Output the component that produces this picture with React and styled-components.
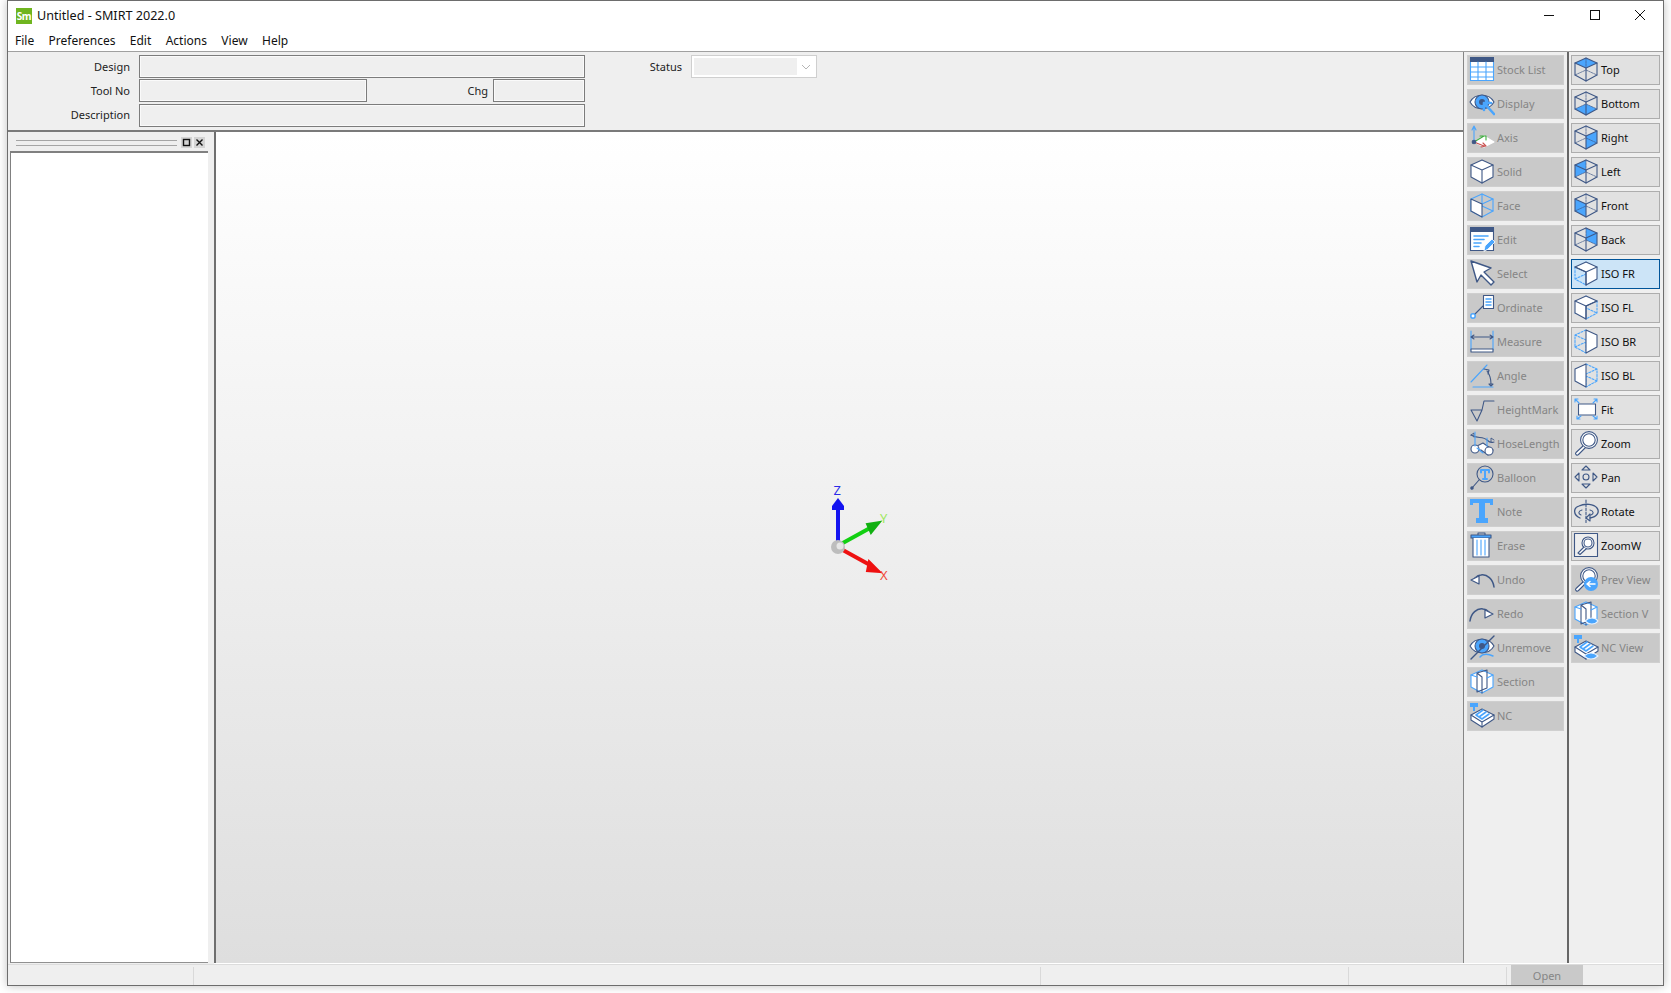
import React from "react";
import styled, { createGlobalStyle } from "styled-components";

const NAVY = "#3f5886";
const BLUE = "#4aa5fd";

const GlobalStyle = createGlobalStyle`
  html, body { margin: 0; padding: 0; background: #fff; }
  body { font-family: "Noto Sans", "Open Sans", "Liberation Sans", sans-serif; overflow: hidden; }
`;

const Page = styled.div`
  width: 1671px;
  height: 993px;
  padding: 0 7px 7px 7px;
  box-sizing: border-box;
  background: #fff;
`;

const Win = styled.div`
  height: 100%;
  box-sizing: border-box;
  border: 1px solid #6d6d6d;
  background: #fff;
  display: flex;
  flex-direction: column;
  box-shadow: 0 0 9px rgba(0, 0, 0, 0.25);
`;

const TitleBar = styled.div`
  height: 29px;
  display: flex;
  align-items: center;
  padding-left: 8px;
  flex: none;
`;

const Logo = styled.div`
  width: 16px;
  height: 16px;
  background: #6fb51f;
  color: #fff;
  font-size: 10px;
  font-weight: 700;
  letter-spacing: -0.5px;
  line-height: 16px;
  text-align: center;
`;

const TitleText = styled.div`
  margin-left: 5px;
  font-size: 12.6px;
  color: #111;
`;

const WinControls = styled.div`
  margin-left: auto;
  display: flex;
  align-items: center;
  margin: 0 17px 2px auto;
  gap: 33.5px;
  svg { display: block; }
`;

const MenuBar = styled.div`
  height: 21px;
  display: flex;
  align-items: flex-start;
  padding-left: 7px;
  gap: 14.4px;
  font-size: 12px;
  line-height: 21px;
  color: #111;
  flex: none;
`;

const Body = styled.div`
  flex: 1;
  display: flex;
  min-height: 0;
  border-top: 1px solid #a0a0a0;
`;

const MainCol = styled.div`
  flex: 1;
  display: flex;
  flex-direction: column;
  min-width: 0;
`;

const FormPanel = styled.div`
  height: 80px;
  flex: none;
  background: #efefef;
  border-bottom: 2px solid #7a7a7a;
  display: flex;
  padding-top: 3px;
  box-sizing: border-box;
`;

const FormGrid = styled.div`
  width: 577px;
  flex: none;
  display: flex;
  flex-direction: column;
  gap: 1px;
`;

const FormRow = styled.div`
  display: flex;
  align-items: center;
  height: 23px;
  margin-top: ${(p) => p.$mt || 0}px;
`;

const Label = styled.div`
  width: ${(p) => p.$w || 122}px;
  margin-right: ${(p) => p.$gap ?? 9}px;
  padding-bottom: ${(p) => (p.$up ? 2 : 0)}px;
  text-align: right;
  font-size: 11px;
  color: #222;
  flex: none;
`;

const Field = styled.div`
  width: ${(p) => p.$w}px;
  height: 23px;
  box-sizing: border-box;
  border: 1px solid #7c7c7c;
  box-shadow: inset 0 0 0 1px #fafafa;
  background: #efefef;
  flex: none;
`;

const Combo = styled.div`
  width: 126px;
  height: 23px;
  box-sizing: border-box;
  border: 1px solid #cfcfcf;
  background: #fff;
  padding: 2px;
  display: flex;
  align-items: center;
  flex: none;
`;

const ComboFace = styled.div`
  width: 103px;
  height: 17px;
  background: #efefef;
`;

const ComboArrow = styled.div`
  flex: 1;
  display: flex;
  justify-content: center;
`;

const SplitRow = styled.div`
  flex: 1;
  display: flex;
  min-height: 0;
`;

const SidePanel = styled.div`
  width: 206px;
  flex: none;
  background: #efefef;
  display: flex;
  flex-direction: column;
  padding-bottom: 1px;
  box-sizing: border-box;
`;

const Grip = styled.div`
  height: 19px;
  flex: none;
  display: flex;
  align-items: center;
  padding: 2px 0 0 8px;
  box-sizing: border-box;
  gap: 2px;
`;

const GripLines = styled.div`
  width: 161px;
  height: 4px;
  margin-right: 2px;
  border-top: 1px solid #a5a5a5;
  border-bottom: 1px solid #a5a5a5;
`;

const GripBtn = styled.div`
  width: 11px;
  height: 11px;
  background: #d4d4d4;
  svg { display: block; }
`;

const TreeBox = styled.div`
  flex: 1;
  margin: 0 6px 0 2px;
  background: #fff;
  border-top: 2px solid #808080;
  border-left: 1px solid #808080;
  border-bottom: 1px solid #909090;
`;

const Canvas = styled.div`
  flex: 1;
  position: relative;
  border-left: 2px solid #6f6f6f;
  background: linear-gradient(#ffffff 0%, #dedede 100%);
  margin-bottom: 1px;
`;

const AxisGizmo = styled.svg`
  position: absolute;
  left: 598px;
  top: 347px;
`;

const ToolCol = styled.div`
  width: ${(p) => p.$w}px;
  flex: none;
  box-sizing: border-box;
  background: #efefef;
  border-left: ${(p) => (p.$thin ? "1px solid #858585" : "2px solid #666")};
  display: flex;
  flex-direction: column;
  gap: 4px;
  padding: 3px 3px 0 ${(p) => (p.$thin ? 3 : 2)}px;
  margin-bottom: 1px;
`;

const ToolBtn = styled.div`
  height: 30px;
  flex: none;
  box-sizing: border-box;
  display: flex;
  align-items: center;
  gap: 2px;
  padding: 0 0 2px 1px;
  font-size: 11px;
  white-space: nowrap;
  overflow: hidden;
  border: 1px solid ${(p) => (p.$hot ? "#005499" : p.$off ? "#cfcfcf" : "#adadad")};
  background: ${(p) => (p.$hot ? "#cce4f7" : p.$off ? "#c9c9c9" : "#e1e1e1")};
  color: ${(p) => (p.$off ? "#858585" : "#111")};
  svg { flex: none; display: block; }
`;

const StatusBar = styled.div`
  height: 21px;
  flex: none;
  display: flex;
  background: #efefef;
  border-top: 1px solid #dcdcdc;
  box-sizing: border-box;
`;

const StatusCell = styled.div`
  width: ${(p) => p.$w}px;
  flex: none;
  box-sizing: border-box;
  margin-top: 2px;
  border-right: 1px solid #d9d9d9;
`;

const OpenBtn = styled.div`
  width: 72px;
  flex: none;
  margin: 0 1px 0 4px;
  background: #c9c9c9;
  color: #858585;
  font-size: 11px;
  line-height: 22px;
  text-align: center;
`;

const Svg = ({ children }) => (
  <svg width="26" height="26" viewBox="0 0 26 26" fill="none" stroke={NAVY} strokeWidth="1.1" strokeLinejoin="round" strokeLinecap="round">
    {children}
  </svg>
);

const HEX = "13,2 24,7 24,19 13,25 2,19 2,7";
const faces = {
  top: "13,2 24,7 13,12 2,7",
  bottom: "2,19 13,14 24,19 13,25",
  right: "13,12 24,7 24,19 13,25",
  left: "2,7 13,2 13,14 2,19",
  front: "2,7 13,12 13,25 2,19",
  back: "13,2 24,7 24,19 13,14",
};

// filled view cubes: Top, Bottom, Right ...
const ViewCube = ({ face }) => (
  <Svg>
    <polygon points={faces[face]} fill={BLUE} stroke="none" />
    <polygon points={HEX} />
    <path d="M2 7L13 12L24 7M13 12V25" />
    <path d="M13 2V14M2 19L13 14L24 19" strokeWidth="0.7" strokeDasharray="2 1" />
  </Svg>
);

// wire cubes with hidden faces in dashed blue
const IsoCube = ({ solid, dash }) => (
  <Svg>
    {dash && <path d={dash} stroke={BLUE} strokeDasharray="2 1.5" />}
    <polygon points={solid} fill="#fff" />
    <path d="M2 7L13 12L24 7M13 12V25" />
  </Svg>
);

const Eye = ({ slash, arrow }) => (
  <Svg>
    <path d="M1 12C6 3 20 3 25 12C20 21 6 21 1 12Z" fill="#fff" />
    <circle cx="13" cy="12" r="7" fill={BLUE} stroke={NAVY} />
    <circle cx="13" cy="12" r="3" fill={NAVY} stroke="none" />
    {arrow && <path d="M15 13L25 24M15 13V20M15 13H22" stroke={BLUE} strokeWidth="2.6" />}
    {slash && <path d="M2 25L25 2" strokeWidth="1.4" />}
    {slash && <path d="M11 23C14 19 20 20 24 22" stroke={BLUE} strokeWidth="1.4" />}
  </Svg>
);

const Section = ({ eye }) => (
  <Svg>
    <polygon points={HEX} fill="#fff" stroke={BLUE} />
    <path d="M8 5L18 2V20L8 24ZM8 5L13 9V25" />
    <path d="M2 7L8 9M24 7L18 10" stroke={BLUE} />
    {eye && <path d="M12 21C16 17 22 17 25 21C22 25 16 25 12 21Z" fill={BLUE} stroke="#e6f2ff" />}
  </Svg>
);

const Nc = ({ eye }) => (
  <Svg>
    <polygon points="2,13 13,7 25,13 25,17 13,25 2,18" fill="#fff" />
    <path d="M2 13L13 20L25 13M13 20V25" />
    <path d="M7 13L14 8M10 15L17 10M13 17L20 12M7 13L13 17" stroke={BLUE} strokeWidth="1.6" />
    <path d="M1 1H9V5H6V9H4V5H1Z" fill={BLUE} stroke="none" />
    {eye && <path d="M11 22C15 18 21 18 25 22C21 26 15 26 11 22Z" fill={BLUE} stroke="#e6f2ff" />}
  </Svg>
);

const Loupe = () => (
  <>
    <circle cx="16" cy="10" r="8.4" fill="#fff" />
    <circle cx="16" cy="10" r="6.2" />
    <path d="M10 16L3 22.5A1.6 1.6 0 0 0 5.5 24.5L12 18" fill="#fff" />
  </>
);

const icons = {
  stock: (
    <Svg>
      <rect x="1.5" y="1.5" width="23" height="23" fill="#fff" stroke={BLUE} />
      <rect x="1" y="1" width="24" height="5" fill={NAVY} stroke="none" />
      <path d="M1.5 11H24.5M1.5 16H24.5M1.5 21H24.5M9 6V24M17 6V24" stroke={BLUE} />
    </Svg>
  ),
  display: <Eye arrow />,
  axis: (
    <Svg>
      <path d="M5 18L15 12L25 18L15 23Z" fill="#fff" stroke="#fff" />
      <path d="M5 18V3M3 6L5 2L7 6" stroke={BLUE} />
      <path d="M5 18L15 12M11 12H17V16" stroke="#3fae3f" />
      <path d="M5 18L15 22M12 23L17 22L14 19" stroke="#c9504f" />
      <circle cx="5" cy="18" r="1.8" fill={NAVY} />
    </Svg>
  ),
  solid: <IsoCube solid={HEX} />,
  face: (
    <Svg>
      <polygon points={HEX} stroke={BLUE} />
      <path d="M13 2V14M24 7L13 12M2 19L13 14L24 19" stroke={BLUE} />
      <polygon points={faces.front} fill="#fff" />
    </Svg>
  ),
  edit: (
    <Svg>
      <rect x="1.5" y="1.5" width="23" height="23" fill="#fff" />
      <rect x="1" y="1" width="24" height="5" fill={NAVY} stroke="none" />
      <path d="M5 10H19M5 13.5H15M5 17H12M5 20.5H10" stroke={BLUE} strokeWidth="1.6" />
      <path d="M15 25L16 20L23 13L26 16L19 23Z" fill={BLUE} stroke="#fff" strokeWidth="0.8" />
    </Svg>
  ),
  select: (
    <Svg>
      <path d="M2 1L22 8L15 12L25 22L22 25L12 15L8 22Z" fill="#fff" strokeWidth="1.4" />
    </Svg>
  ),
  ordinate: (
    <Svg>
      <rect x="14.5" y="1.5" width="10" height="13" fill="#fff" />
      <path d="M17 5H22M17 8H22M17 11H22" stroke={BLUE} strokeWidth="1.5" />
      <path d="M5 21L14 12" />
      <circle cx="4" cy="22" r="2.2" fill="#fff" stroke={BLUE} strokeWidth="1.5" />
    </Svg>
  ),
  measure: (
    <Svg>
      <path d="M2 3V22M24 3V22" stroke={BLUE} />
      <path d="M2 9H24M2 9L5 7M2 9L5 11M24 9L21 7M24 9L21 11" />
      <rect x="2" y="21" width="22" height="3" fill="#fff" />
    </Svg>
  ),
  angle: (
    <Svg>
      <path d="M2 20L18 3M4 25H24" stroke={BLUE} />
      <path d="M18 9C21 13 22 17 22 22M15 7L20 8L19 12M20 22H24L22 24Z" />
    </Svg>
  ),
  height: (
    <Svg>
      <path d="M2 14H13L8 25ZM13 14L15 5H25" />
    </Svg>
  ),
  hose: (
    <Svg>
      <path d="M2 5C8 9 14 6 18 10S24 12 25 12" />
      <path d="M2 5L5 3V7M25 10L22 8V12" strokeWidth="0.9" />
      <path d="M6 17L14 13L24 20L19 25L12 20H5" fill="#fff" />
      <circle cx="6" cy="19" r="4" fill="#fff" />
      <circle cx="20" cy="21" r="4" fill="#fff" />
      <path d="M6 2V16M18 8V16M8 18L14 23" stroke={BLUE} />
    </Svg>
  ),
  balloon: (
    <Svg>
      <circle cx="16" cy="10" r="8" />
      <path d="M12 6H20V8.5M16 6V15M14 15H18M12 6V8.5" stroke={BLUE} strokeWidth="2" />
      <path d="M10 16L3 24" />
      <circle cx="3" cy="24" r="1.2" fill={NAVY} />
    </Svg>
  ),
  note: (
    <Svg>
      <path d="M1 1H24V7H21V5H16V20H19V25H7V20H10V5H4V7H1Z" fill={BLUE} stroke="none" />
    </Svg>
  ),
  erase: (
    <Svg>
      <path d="M9 3V1H16V3" />
      <rect x="2" y="3" width="20" height="3" fill={BLUE} />
      <path d="M4 6V25H20V6" fill="#fff" />
      <path d="M8 8V23M12 8V23M16 8V23" stroke={BLUE} />
    </Svg>
  ),
  undo: (
    <Svg>
      <path d="M25 21C24 13 18 8 12 9C10 9 8 10 6 12" strokeWidth="1.5" />
      <path d="M2 14L10 10L10 18Z" fill="#fff" strokeWidth="1.2" />
    </Svg>
  ),
  redo: (
    <Svg>
      <path d="M1 21C2 13 8 8 14 9C16 9 18 10 20 12" strokeWidth="1.5" />
      <path d="M24 14L16 10L16 18Z" fill="#fff" strokeWidth="1.2" />
    </Svg>
  ),
  unremove: <Eye slash />,
  section: <Section />,
  nc: <Nc />,
  isofr: <IsoCube solid="13,2 24,7 24,19 13,25 13,12 2,7" dash="M2 7V19L13 25M2 19L13 14L24 19M13 14V2" />,
  isofl: <IsoCube solid="13,2 24,7 13,12 13,25 2,19 2,7" dash="M24 7V19L13 25M2 19L13 14L24 19M13 14V2" />,
  isobr: (
    <Svg>
      <path d="M13 2L2 7V19L13 25M2 7L13 12V25M2 19L13 14" stroke={BLUE} strokeDasharray="2 1.5" />
      <polygon points="13,2 24,7 24,19 13,25 13,14" fill="#fff" />
    </Svg>
  ),
  isobl: (
    <Svg>
      <path d="M13 2L24 7V19L13 25M24 7L13 12V25M24 19L13 14" stroke={BLUE} strokeDasharray="2 1.5" />
      <polygon points="13,2 2,7 2,19 13,25 13,14" fill="#fff" />
    </Svg>
  ),
  fit: (
    <Svg>
      <rect x="5.5" y="8" width="17" height="11" fill="#fff" />
      <path d="M2 3L6 7M2 3V6M2 3H5M24 3L20 7M24 3V6M24 3H21M4 23L8 20M4 23V20M4 23H7M24 23L20 20M24 23V20M24 23H21" stroke={BLUE} />
    </Svg>
  ),
  zoom: (
    <Svg>
      <Loupe />
    </Svg>
  ),
  pan: (
    <Svg>
      <circle cx="13" cy="13" r="3" />
      <path d="M9 6L13 2L17 6ZM9 20L13 24L17 20ZM6 9L2 13L6 17ZM20 9L24 13L20 17Z" />
    </Svg>
  ),
  rotate: (
    <Svg>
      <path d="M13 2V25" strokeDasharray="2.5 1.5" />
      <path d="M7 20C0 17 0 10 6 8C12 5 21 6 24 10C27 14 24 19 17 20" strokeWidth="1.3" />
      <path d="M9 12C5 13 5 16 8 17M17 12C21 13 21 16 18 17M17 16V23L13 20Z" />
    </Svg>
  ),
  zoomw: (
    <Svg>
      <rect x="1.5" y="1.5" width="23" height="23" fill="#eee" />
      <circle cx="15" cy="11" r="6" fill="#fff" />
      <circle cx="15" cy="11" r="4" />
      <path d="M11 15L5 21L7 22.5L13 17" fill="#fff" />
    </Svg>
  ),
  prev: (
    <Svg>
      <Loupe />
      <circle cx="18" cy="18" r="7" fill={BLUE} stroke="none" />
      <path d="M14 18H22M14 18L17 15.5M14 18L17 20.5" stroke="#fff" strokeWidth="1.5" />
    </Svg>
  ),
  sectionv: <Section eye />,
  ncv: <Nc eye />,
};

const leftTools = [
  ["Stock List", "stock"], ["Display", "display"], ["Axis", "axis"], ["Solid", "solid"],
  ["Face", "face"], ["Edit", "edit"], ["Select", "select"], ["Ordinate", "ordinate"],
  ["Measure", "measure"], ["Angle", "angle"], ["HeightMark", "height"], ["HoseLength", "hose"],
  ["Balloon", "balloon"], ["Note", "note"], ["Erase", "erase"], ["Undo", "undo"],
  ["Redo", "redo"], ["Unremove", "unremove"], ["Section", "section"], ["NC", "nc"],
];

const viewTools = [
  { t: "Top", el: <ViewCube face="top" /> },
  { t: "Bottom", el: <ViewCube face="bottom" /> },
  { t: "Right", el: <ViewCube face="right" /> },
  { t: "Left", el: <ViewCube face="left" /> },
  { t: "Front", el: <ViewCube face="front" /> },
  { t: "Back", el: <ViewCube face="back" /> },
  { t: "ISO FR", el: icons.isofr, hot: true },
  { t: "ISO FL", el: icons.isofl },
  { t: "ISO BR", el: icons.isobr },
  { t: "ISO BL", el: icons.isobl },
  { t: "Fit", el: icons.fit },
  { t: "Zoom", el: icons.zoom },
  { t: "Pan", el: icons.pan },
  { t: "Rotate", el: icons.rotate },
  { t: "ZoomW", el: icons.zoomw },
  { t: "Prev View", el: icons.prev, off: true },
  { t: "Section V", el: icons.sectionv, off: true },
  { t: "NC View", el: icons.ncv, off: true },
];

const Gizmo = () => (
  <AxisGizmo width="90" height="110" viewBox="0 0 90 110">
    <path d="M24 66V26" stroke="#1414f0" strokeWidth="4" />
    <path d="M24 19L30 27V31H18V27Z" fill="#1414f0" />
    <path d="M27 65L56 49" stroke="#12d012" strokeWidth="4" />
    <path d="M66 43L53 45L57 54Z" fill="#12b012" stroke="#12b012" strokeWidth="2" />
    <path d="M27 70L56 86" stroke="#ee1111" strokeWidth="4" />
    <path d="M66 93L53 92L55 82Z" fill="#ee1111" stroke="#ee1111" strokeWidth="2" />
    <circle cx="24" cy="68" r="7" fill="#bdbdbd" />
    <circle cx="26" cy="67" r="3.5" fill="#e6e6e6" />
    <text x="19.5" y="16" fontSize="13" fontFamily="Noto Sans" fill="#2a2ae8">Z</text>
    <text x="66" y="44" fontSize="13" fontFamily="Noto Sans" fill="#9fe860">Y</text>
    <text x="66" y="101" fontSize="13" fontFamily="Noto Sans" fill="#f04a3a">X</text>
  </AxisGizmo>
);

const App = () => (
  <Page>
    <GlobalStyle />
    <Win>
      <TitleBar>
        <Logo>Sm</Logo>
        <TitleText>Untitled - SMIRT 2022.0</TitleText>
        <WinControls>
          <svg width="12" height="12" stroke="#111"><path d="M1 6.5H11" /></svg>
          <svg width="12" height="12" fill="none" stroke="#111"><rect x="1.5" y="1.5" width="9" height="9" /></svg>
          <svg width="12" height="12" stroke="#111"><path d="M1 1L11 11M11 1L1 11" /></svg>
        </WinControls>
      </TitleBar>
      <MenuBar>
        {["File", "Preferences", "Edit", "Actions", "View", "Help"].map((m) => (
          <span key={m}>{m}</span>
        ))}
      </MenuBar>
      <Body>
        <MainCol>
          <FormPanel>
            <FormGrid>
              <FormRow>
                <Label>Design</Label>
                <Field $w={446} />
              </FormRow>
              <FormRow>
                <Label>Tool No</Label>
                <Field $w={228} />
                <Label $w={121} $gap={5}>Chg</Label>
                <Field $w={92} />
              </FormRow>
              <FormRow $mt={1}>
                <Label $up>Description</Label>
                <Field $w={446} />
              </FormRow>
            </FormGrid>
            <FormRow>
              <Label $w={97} $gap={9}>Status</Label>
              <Combo>
                <ComboFace />
                <ComboArrow>
                  <svg width="10" height="6" fill="none" stroke="#b5b5b5"><path d="M1 1L5 5L9 1" /></svg>
                </ComboArrow>
              </Combo>
            </FormRow>
          </FormPanel>
          <SplitRow>
            <SidePanel>
              <Grip>
                <GripLines />
                <GripBtn>
                  <svg width="11" height="11" fill="none" stroke="#111"><rect x="2.5" y="2.5" width="6" height="6" strokeWidth="1.4" /></svg>
                </GripBtn>
                <GripBtn>
                  <svg width="11" height="11" stroke="#111" strokeWidth="1.4"><path d="M2.5 2.5L8.5 8.5M8.5 2.5L2.5 8.5" /></svg>
                </GripBtn>
              </Grip>
              <TreeBox />
            </SidePanel>
            <Canvas>
              <Gizmo />
            </Canvas>
          </SplitRow>
        </MainCol>
        <ToolCol $w={104} $thin>
          {leftTools.map(([t, k]) => (
            <ToolBtn key={t} $off>
              {icons[k]}
              {t}
            </ToolBtn>
          ))}
        </ToolCol>
        <ToolCol $w={96}>
          {viewTools.map((b) => (
            <ToolBtn key={b.t} $off={b.off} $hot={b.hot}>
              {b.el}
              {b.t}
            </ToolBtn>
          ))}
        </ToolCol>
      </Body>
      <StatusBar>
        <StatusCell $w={186} />
        <StatusCell $w={847} />
        <StatusCell $w={308} />
        <StatusCell $w={158} />
        <OpenBtn>Open</OpenBtn>
      </StatusBar>
    </Win>
  </Page>
);

export default App;
